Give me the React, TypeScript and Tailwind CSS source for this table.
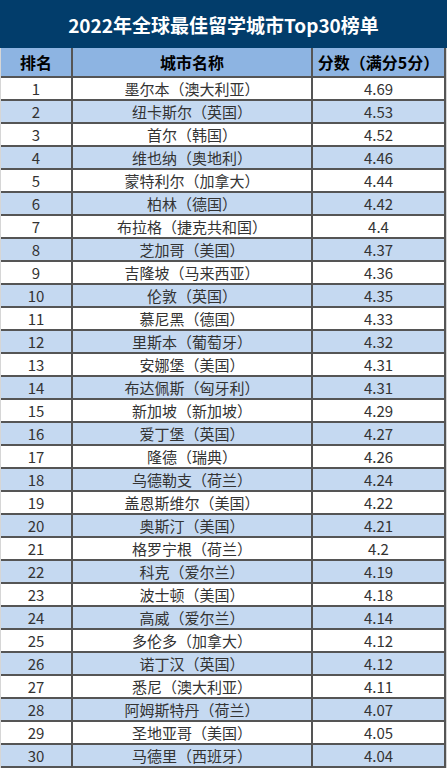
const cities: [string, string][] = [
  ['墨尔本（澳大利亚）', '4.69'],
  ['纽卡斯尔（英国）', '4.53'],
  ['首尔（韩国）', '4.52'],
  ['维也纳（奥地利）', '4.46'],
  ['蒙特利尔（加拿大）', '4.44'],
  ['柏林（德国）', '4.42'],
  ['布拉格（捷克共和国）', '4.4'],
  ['芝加哥（美国）', '4.37'],
  ['吉隆坡（马来西亚）', '4.36'],
  ['伦敦（英国）', '4.35'],
  ['慕尼黑（德国）', '4.33'],
  ['里斯本（葡萄牙）', '4.32'],
  ['安娜堡（美国）', '4.31'],
  ['布达佩斯（匈牙利）', '4.31'],
  ['新加坡（新加坡）', '4.29'],
  ['爱丁堡（英国）', '4.27'],
  ['隆德（瑞典）', '4.26'],
  ['乌德勒支（荷兰）', '4.24'],
  ['盖恩斯维尔（美国）', '4.22'],
  ['奥斯汀（美国）', '4.21'],
  ['格罗宁根（荷兰）', '4.2'],
  ['科克（爱尔兰）', '4.19'],
  ['波士顿（美国）', '4.18'],
  ['高威（爱尔兰）', '4.14'],
  ['多伦多（加拿大）', '4.12'],
  ['诺丁汉（英国）', '4.12'],
  ['悉尼（澳大利亚）', '4.11'],
  ['阿姆斯特丹（荷兰）', '4.07'],
  ['圣地亚哥（美国）', '4.05'],
  ['马德里（西班牙）', '4.04'],
];

export default function App() {
  return (
    <div className="w-[447px] h-[768px] overflow-hidden bg-white font-['Noto_Sans_CJK_SC','Noto_Sans',sans-serif]">
      <div className="h-[48px] bg-[#023d6b] flex items-center justify-center text-white font-bold text-[19px] leading-none">
        2022年全球最佳留学城市Top30榜单
      </div>

      <div className="border-l border-r border-[#d6d6d6]">
        <div className="flex h-[30px] bg-[#8db4e2] border-b-2 border-[#555] text-[16px] font-bold text-black leading-none">
          <div className="w-[72px] border-r-2 border-[#555] flex items-center justify-center">排名</div>
          <div className="w-[240px] border-r-2 border-[#555] flex items-center justify-center">城市名称</div>
          <div className="w-[133px] border-r-2 border-[#555] flex items-center justify-center">分数（满分5分）</div>
        </div>

        {cities.map(([name, score], i) => (
          <div
            key={name}
            className={`flex h-[23px] border-b-2 border-[#555] text-[15px] text-[#333] leading-none ${
              i % 2 === 1 ? 'bg-[#c5d9f1]' : 'bg-white'
            }`}
          >
            <div className="w-[72px] border-r-2 border-[#555] flex items-center justify-center">{i + 1}</div>
            <div className="w-[240px] border-r-2 border-[#555] flex items-center justify-center">{name}</div>
            <div className="w-[133px] border-r-2 border-[#555] flex items-center justify-center">{score}</div>
          </div>
        ))}
      </div>
    </div>
  );
}
